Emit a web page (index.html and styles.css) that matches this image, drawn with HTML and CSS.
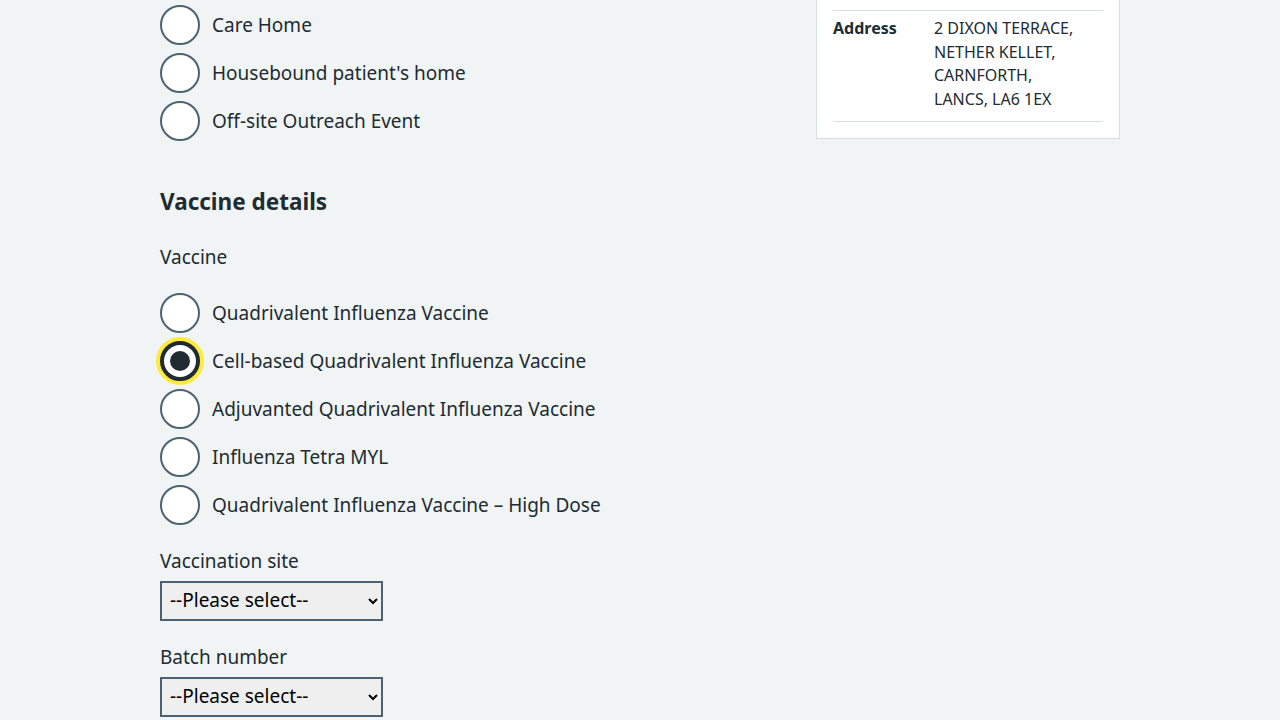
FILE: index.html
```html
<!DOCTYPE html>
<html lang="en">
<head>
<meta charset="utf-8">
<title>Vaccine details</title>
<link rel="stylesheet" href="styles.css">
</head>
<body>
<div class="container">
  <main class="main">
    <div class="radios first">
      <div class="radio"><span class="circle"></span><span class="label">Care Home</span></div>
      <div class="radio"><span class="circle"></span><span class="label">Housebound patient's home</span></div>
      <div class="radio"><span class="circle"></span><span class="label">Off-site Outreach Event</span></div>
    </div>

    <h2 class="heading">Vaccine details</h2>
    <div class="field-label">Vaccine</div>
    <div class="radios">
      <div class="radio"><span class="circle"></span><span class="label">Quadrivalent Influenza Vaccine</span></div>
      <div class="radio"><span class="circle checked"></span><span class="label">Cell-based Quadrivalent Influenza Vaccine</span></div>
      <div class="radio"><span class="circle"></span><span class="label">Adjuvanted Quadrivalent Influenza Vaccine</span></div>
      <div class="radio"><span class="circle"></span><span class="label">Influenza Tetra MYL</span></div>
      <div class="radio"><span class="circle"></span><span class="label">Quadrivalent Influenza Vaccine – High Dose</span></div>
    </div>

    <div class="field">
      <div class="field-label">Vaccination site</div>
      <select class="select"><option>--Please select--</option></select>
    </div>
    <div class="field">
      <div class="field-label">Batch number</div>
      <select class="select"><option>--Please select--</option></select>
    </div>
  </main>
  <aside class="side">
    <div class="card">
      <dl class="summary">
        <div class="row">
          <dt>Address</dt>
          <dd>2 DIXON TERRACE,<br>NETHER KELLET,<br>CARNFORTH,<br>LANCS, LA6 1EX</dd>
        </div>
      </dl>
    </div>
  </aside>
</div>
</body>
</html>
```
FILE: styles.css
```css
* { box-sizing: border-box; }
html, body { margin: 0; padding: 0; }
body {
  background: #f0f4f5;
  color: #212b32;
  font-family: "Noto Sans", "Liberation Sans", sans-serif;
  height: 720px;
  overflow: hidden;
}
.container {
  width: 960px;
  margin: 0 auto;
  display: grid;
  grid-template-columns: 640px 304px;
  column-gap: 16px;
  align-items: start;
}
.main { display: flex; flex-direction: column; }
.radios { display: flex; flex-direction: column; gap: 8px; }
.radios.first { padding-top: 5px; }
.radio { display: flex; align-items: center; height: 40px; }
.circle {
  width: 40px; height: 40px; flex: none;
  border: 2px solid #4c6272;
  border-radius: 50%;
  background: #fff;
  position: relative;
}
.circle.checked {
  border: 4px solid #212b32;
  box-shadow: 0 0 0 4px #ffeb3b;
}
.circle.checked::after {
  content: "";
  position: absolute;
  left: 6px; top: 6px;
  width: 20px; height: 20px;
  border-radius: 50%;
  background: #212b32;
}
.label {
  padding-left: 12px;
  font-size: 19px;
  line-height: 28px;
}
.heading {
  margin: 45px 0 0;
  font-size: 22.5px;
  line-height: 32px;
  font-weight: 700;
}
.field-label {
  font-size: 19px;
  line-height: 28px;
}
.heading + .field-label { margin-top: 25px; margin-bottom: 22px; }
.field { display: flex; flex-direction: column; align-items: flex-start; margin-top: 22px; }
.field .field-label { margin-bottom: 6px; }
.select {
  width: 223px;
  height: 40px;
  border: 2px solid #4c6272;
  border-radius: 0;
  background: #efefef;
  color: #000;
  font-family: inherit;
  font-size: 19px;
  padding: 0 4px 3px 4px;
  margin: 0;
}
.card {
  background: #fff;
  border: 1px solid #d8dde0;
  padding: 0 16px 16px;
  margin-top: -10px;
}
.summary { margin: 0; padding-top: 19px; }
.row {
  display: flex;
  border-top: 1px solid #d8dde0;
  border-bottom: 1px solid #d8dde0;
  padding: 6px 0 10px;
  font-size: 16px;
  line-height: 23.5px;
}
.row dt { width: 101px; font-weight: 700; flex: none; }
.row dd { margin: 0; }
```
